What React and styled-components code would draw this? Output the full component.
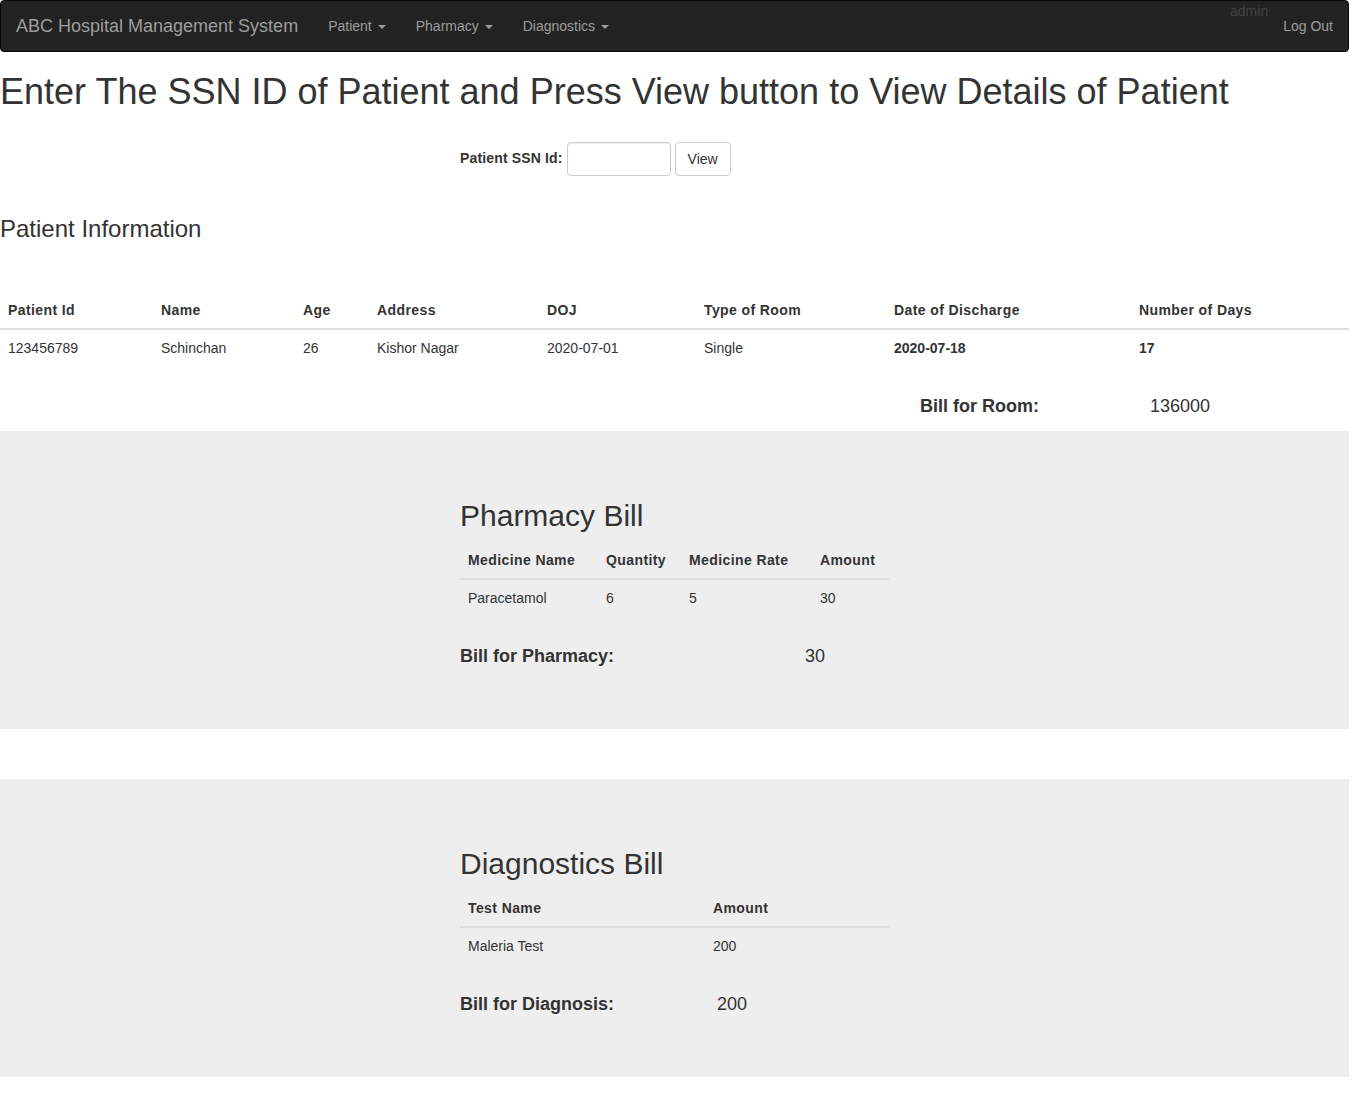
import React from "react";
import styled, { createGlobalStyle } from "styled-components";

const GlobalStyle = createGlobalStyle`
  html, body {
    margin: 0;
    padding: 0;
    background: #fff;
  }
  body {
    font-family: "Liberation Sans", Arial, sans-serif;
    font-size: 14px;
    line-height: 1.42857;
    color: #333;
  }
  * {
    box-sizing: border-box;
  }
`;

const patient = {
  id: "123456789",
  name: "Schinchan",
  age: "26",
  address: "Kishor Nagar",
  doj: "2020-07-01",
  room: "Single",
  discharge: "2020-07-18",
  days: "17",
};

const medicines = [{ name: "Paracetamol", qty: "6", rate: "5", amount: "30" }];
const tests = [{ name: "Maleria Test", amount: "200" }];

function App() {
  return (
    <>
      <GlobalStyle />
      <Page>
        <Navbar>
          <Brand href="#">ABC Hospital Management System</Brand>
          <NavList>
            <NavItem>
              Patient <Caret />
            </NavItem>
            <NavItem>
              Pharmacy <Caret />
            </NavItem>
            <NavItem>
              Diagnostics <Caret />
            </NavItem>
          </NavList>
          <NavRight>
            <UserName>admin</UserName>
            <NavItem>Log Out</NavItem>
          </NavRight>
        </Navbar>

        <Title>
          Enter The SSN ID of Patient and Press View button to View Details of
          Patient
        </Title>

        <SearchForm onSubmit={(event) => event.preventDefault()}>
          <Label htmlFor="ssn">Patient SSN Id:</Label>
          <Input id="ssn" type="text" />
          <Button type="submit">View</Button>
        </SearchForm>

        <SectionTitle>Patient Information</SectionTitle>

        <Table $top={50}>
          <colgroup>
            {[153, 142, 74, 170, 157, 190, 245, 218].map((w, i) => (
              <col key={i} style={{ width: w }} />
            ))}
          </colgroup>
          <thead>
            <tr>
              <Th>Patient Id</Th>
              <Th>Name</Th>
              <Th>Age</Th>
              <Th>Address</Th>
              <Th>DOJ</Th>
              <Th>Type of Room</Th>
              <Th>Date of Discharge</Th>
              <Th>Number of Days</Th>
            </tr>
          </thead>
          <tbody>
            <tr>
              <Td>{patient.id}</Td>
              <Td>{patient.name}</Td>
              <Td>{patient.age}</Td>
              <Td>{patient.address}</Td>
              <Td>{patient.doj}</Td>
              <Td>{patient.room}</Td>
              <Td $bold>{patient.discharge}</Td>
              <Td $bold>{patient.days}</Td>
            </tr>
          </tbody>
        </Table>

        <BillLine $indent={920} $labelWidth={230} $top={30} $bottom={15}>
          <BillLabel>Bill for Room:</BillLabel>
          <BillValue>136000</BillValue>
        </BillLine>

        <Jumbotron>
          <BillBlock>
            <BillTitle>Pharmacy Bill</BillTitle>
            <Table $width={429}>
              <colgroup>
                {[138, 83, 131, 77].map((w, i) => (
                  <col key={i} style={{ width: w }} />
                ))}
              </colgroup>
              <thead>
                <tr>
                  <Th>Medicine Name</Th>
                  <Th>Quantity</Th>
                  <Th>Medicine Rate</Th>
                  <Th>Amount</Th>
                </tr>
              </thead>
              <tbody>
                {medicines.map((m) => (
                  <tr key={m.name}>
                    <Td>{m.name}</Td>
                    <Td>{m.qty}</Td>
                    <Td>{m.rate}</Td>
                    <Td>{m.amount}</Td>
                  </tr>
                ))}
              </tbody>
            </Table>
            <BillLine $labelWidth={345} $top={30}>
              <BillLabel>Bill for Pharmacy:</BillLabel>
              <BillValue>30</BillValue>
            </BillLine>
          </BillBlock>
        </Jumbotron>

        <Jumbotron>
          <BillBlock>
            <BillTitle>Diagnostics Bill</BillTitle>
            <Table $width={429}>
              <colgroup>
                {[245, 184].map((w, i) => (
                  <col key={i} style={{ width: w }} />
                ))}
              </colgroup>
              <thead>
                <tr>
                  <Th>Test Name</Th>
                  <Th>Amount</Th>
                </tr>
              </thead>
              <tbody>
                {tests.map((t) => (
                  <tr key={t.name}>
                    <Td>{t.name}</Td>
                    <Td>{t.amount}</Td>
                  </tr>
                ))}
              </tbody>
            </Table>
            <BillLine $labelWidth={257} $top={30}>
              <BillLabel>Bill for Diagnosis:</BillLabel>
              <BillValue>200</BillValue>
            </BillLine>
          </BillBlock>
        </Jumbotron>
      </Page>
    </>
  );
}

const Page = styled.div`
  width: 1349px;
  padding-bottom: 30px;
`;

const Navbar = styled.nav`
  display: flex;
  align-items: stretch;
  height: 52px;
  background: #222;
  border: 1px solid #080808;
  border-radius: 4px;
`;

const Brand = styled.a`
  padding: 15px;
  font-size: 18px;
  line-height: 20px;
  color: #9d9d9d;
  text-decoration: none;
`;

const NavList = styled.div`
  display: flex;
`;

const NavItem = styled.a`
  display: flex;
  align-items: center;
  gap: 6px;
  padding: 15px;
  line-height: 20px;
  font-size: 14px;
  color: #9d9d9d;
  text-decoration: none;
  cursor: pointer;
`;

const Caret = styled.span`
  display: inline-block;
  width: 0;
  height: 0;
  margin-top: 1px;
  border-top: 4px solid #9d9d9d;
  border-left: 4px solid transparent;
  border-right: 4px solid transparent;
`;

const NavRight = styled.div`
  display: flex;
  margin-left: auto;
`;

const UserName = styled.span`
  align-self: flex-start;
  line-height: 20px;
  font-size: 14px;
  color: #444;
`;

const Title = styled.h1`
  margin: 20px 0 10px;
  font-size: 36px;
  font-weight: 500;
  line-height: 1.1;
  color: #333;
`;

const SearchForm = styled.form`
  display: flex;
  align-items: center;
  gap: 4px;
  margin-top: 30px;
  padding-left: 460px;
  height: 34px;
`;

const Label = styled.label`
  font-weight: 700;
  font-size: 14px;
  letter-spacing: 0.15px;
`;

const Input = styled.input`
  width: 104px;
  height: 34px;
  padding: 6px 12px;
  border: 1px solid #ccc;
  border-radius: 4px;
  box-shadow: inset 0 1px 1px rgba(0, 0, 0, 0.075);
  font-family: inherit;
  font-size: 14px;
`;

const Button = styled.button`
  height: 34px;
  padding: 6px 12px;
  background: #fff;
  border: 1px solid #ccc;
  border-radius: 4px;
  font-family: inherit;
  font-size: 14px;
  color: #333;
  cursor: pointer;
`;

const SectionTitle = styled.h3`
  margin: 40px 0 0;
  font-size: 24px;
  font-weight: 500;
  line-height: 1.1;
`;

const Table = styled.table`
  width: ${(p) => (p.$width ? `${p.$width}px` : "100%")};
  margin-top: ${(p) => p.$top || 0}px;
  border-collapse: collapse;
  border-spacing: 0;
  table-layout: fixed;
`;

const Th = styled.th`
  padding: 8px;
  text-align: left;
  font-weight: 700;
  line-height: 20px;
  letter-spacing: 0.4px;
  border-bottom: 2px solid #ddd;
  white-space: nowrap;
`;

const Td = styled.td`
  padding: 8px;
  line-height: 20px;
  font-weight: ${(p) => (p.$bold ? 700 : 400)};
  border-top: 1px solid transparent;
  white-space: nowrap;
`;

const BillLine = styled.div`
  display: grid;
  grid-template-columns: ${(p) => p.$labelWidth}px auto;
  margin: ${(p) => p.$top || 0}px 0 ${(p) => p.$bottom || 0}px
    ${(p) => p.$indent || 0}px;
  font-size: 18px;
  line-height: 20px;
`;

const BillLabel = styled.span`
  font-weight: 700;
`;

const BillValue = styled.span`
  font-weight: 400;
`;

const Jumbotron = styled.section`
  background: #eee;
  padding: 48px 0 63px;
  & + & {
    margin-top: 50px;
  }
`;

const BillBlock = styled.div`
  padding-left: 460px;
`;

const BillTitle = styled.h2`
  margin: 20px 0 10px;
  font-size: 30px;
  font-weight: 500;
  line-height: 1.1;
`;

export default App;
